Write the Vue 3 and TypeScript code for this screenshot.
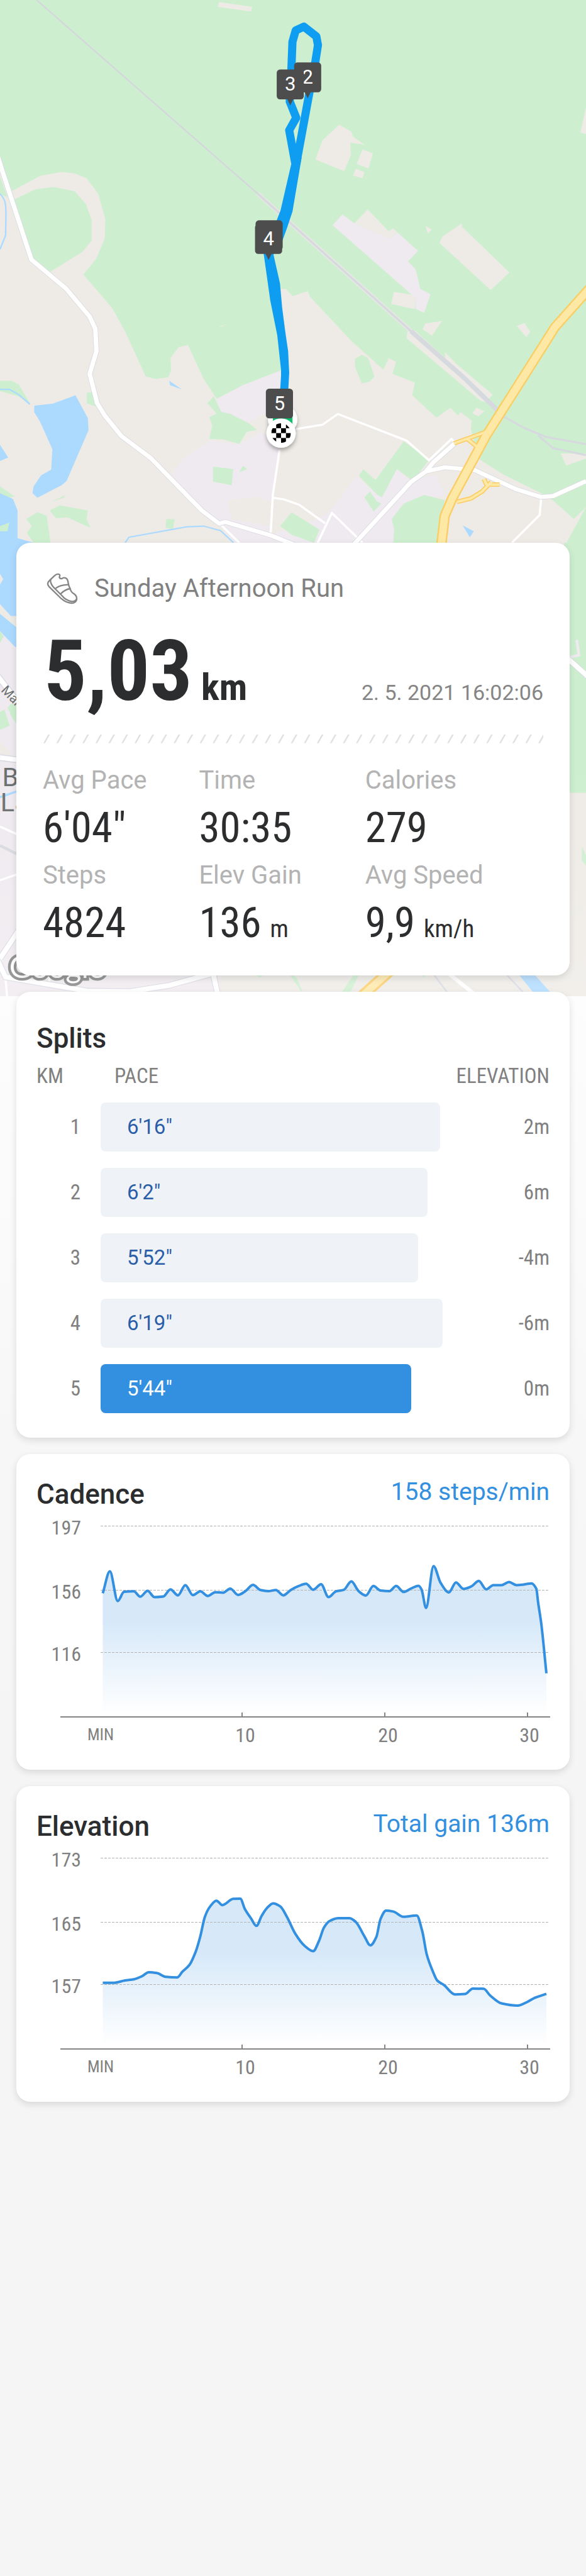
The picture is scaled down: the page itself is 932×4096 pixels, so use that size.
<script setup lang="ts">
interface Stat { label: string; value: string; unit?: string }
interface Split { km: number; pace: string; seconds: number; elevation: string }
interface Marker { label: string; x: number; y: number }
interface Chart {
  id: string
  title: string
  summary: string
  levels: string[]
  offset: number
  points: number[][]
}

const stats: Stat[] = [
  { label: 'Avg Pace', value: '6\'04"' },
  { label: 'Time', value: '30:35' },
  { label: 'Calories', value: '279' },
  { label: 'Steps', value: '4824' },
  { label: 'Elev Gain', value: '136', unit: 'm' },
  { label: 'Avg Speed', value: '9,9', unit: 'km/h' },
]

const splits: Split[] = [
  { km: 1, pace: '6\'16"', seconds: 376, elevation: '2m' },
  { km: 2, pace: '6\'2"', seconds: 362, elevation: '6m' },
  { km: 3, pace: '5\'52"', seconds: 352, elevation: '-4m' },
  { km: 4, pace: '6\'19"', seconds: 379, elevation: '-6m' },
  { km: 5, pace: '5\'44"', seconds: 344, elevation: '0m' },
]
const fullBarSeconds = 386
const fastest = Math.min(...splits.map((s) => s.seconds))
const barWidth = (s: Split): string => `${((s.seconds / fullBarSeconds) * 100).toFixed(2)}%`

const markers: Marker[] = [
  { label: '2', x: 567, y: 115 },
  { label: '3', x: 535, y: 128 },
  { label: '', x: 496, y: 406 },
  { label: '4', x: 495, y: 413 },
  { label: '5', x: 515, y: 716 },
]

const checks: number[][] = []
for (let row = 0; row < 4; row++) {
  for (let col = 0; col < 4; col++) {
    if ((row + col) % 2 === 1) checks.push([500 + col * 9, 780 + row * 9])
  }
}

const charts: Chart[] = [
  {
    id: 'cadence',
    title: 'Cadence',
    summary: '158 steps/min',
    levels: ['197', '156', '116'],
    offset: -114,
    points: [
      [275, 697], [294, 598], [315, 732], [332, 690], [358, 688], [375, 712], [395, 686], [413, 714], [437, 711],
      [456, 679], [476, 706], [496, 660], [516, 705], [536, 688], [556, 709], [576, 692], [597, 694], [616, 676],
      [637, 704], [656, 688], [677, 659], [697, 682], [718, 687], [738, 682], [758, 706], [778, 682], [798, 665],
      [819, 654], [838, 681], [859, 656], [879, 714], [899, 688], [920, 681], [940, 643], [960, 688], [979, 707],
      [999, 664], [1018, 684], [1042, 687], [1060, 664], [1080, 691], [1100, 675], [1120, 663], [1128, 680],
      [1140, 763], [1160, 574], [1179, 650], [1201, 693], [1220, 648], [1240, 677], [1262, 665], [1281, 641],
      [1301, 679], [1320, 660], [1342, 660], [1362, 646], [1382, 660], [1402, 657], [1422, 652], [1435, 676],
      [1440, 740], [1448, 830], [1462, 1058],
    ],
  },
  {
    id: 'elevation',
    title: 'Elevation',
    summary: 'Total gain 136m',
    levels: ['173', '165', '157'],
    offset: -116,
    points: [
      [275, 962], [303, 962], [335, 951], [358, 946], [380, 932], [398, 914], [420, 918], [443, 935], [474, 938],
      [488, 912], [507, 881], [524, 820], [536, 752], [548, 665], [561, 620], [579, 591], [595, 611], [624, 583],
      [643, 582], [655, 628], [672, 672], [686, 705], [700, 660], [714, 625], [731, 603], [750, 617], [768, 665],
      [790, 740], [815, 795], [838, 819], [853, 775], [867, 712], [882, 683], [905, 670], [935, 670], [952, 687],
      [975, 752], [991, 793], [1007, 755], [1018, 675], [1033, 636], [1052, 640], [1080, 664], [1115, 658],
      [1130, 730], [1142, 835], [1158, 910], [1170, 952], [1188, 972], [1217, 1014], [1245, 1012], [1265, 988],
      [1294, 989], [1312, 1020], [1342, 1055], [1385, 1065], [1410, 1049], [1432, 1029], [1462, 1012],
    ],
  },
]
const levelY = [24, 126, 225]
const ticks = [
  { label: '10', x: 327, textX: 332 },
  { label: '20', x: 554, textX: 559 },
  { label: '30', x: 781, textX: 784 },
]

/* Monotone cubic through the samples, flat at every peak and valley. */
function curve(p: number[][]): string {
  const slope = (i: number): number => (p[i + 1][1] - p[i][1]) / (p[i + 1][0] - p[i][0])
  const tangent = (i: number): number => {
    if (i === 0) return slope(0)
    if (i === p.length - 1) return slope(i - 1)
    const a = slope(i - 1)
    const b = slope(i)
    return a * b <= 0 ? 0 : (2 * a * b) / (a + b)
  }
  let d = `M${p[0][0]} ${p[0][1]}`
  for (let i = 0; i < p.length - 1; i++) {
    const h = (p[i + 1][0] - p[i][0]) / 3
    const y1 = p[i][1] + tangent(i) * h
    const y2 = p[i + 1][1] - tangent(i + 1) * h
    d += `C${(p[i][0] + h).toFixed(1)} ${y1.toFixed(1)} ${(p[i + 1][0] - h).toFixed(1)} ${y2.toFixed(1)} ${p[i + 1][0]} ${p[i + 1][1]}`
  }
  return d
}
const area = (p: number[][]): string => `${curve(p)}V1245H${p[0][0]}Z`
</script>

<template>
  <main class="page">
    <svg class="map" viewBox="0 0 1080 1836" role="img" aria-label="Route map">
      <defs>
        <linearGradient id="haze" x1="0" y1="0" x2="0" y2="1">
          <stop offset="0" stop-color="#fff" stop-opacity="0" />
          <stop offset="1" stop-color="#fff" stop-opacity="0.22" />
        </linearGradient>
        <clipPath id="flag"><circle cx="518" cy="798" r="18" /></clipPath>
        <filter id="drop" x="-50%" y="-50%" width="200%" height="200%">
          <feDropShadow dx="0" dy="5" stdDeviation="4" flood-opacity="0.3" />
        </filter>
      </defs>
      <rect width="1080" height="1836" class="land" />

      <g transform="scale(0.68878 0.63776)">
        <path class="green" d="M0 0H1568V1600H1500L1568 1465 1535 1500 1480 1446 1448 1425 1345 1370 1280 1325 1260 1240 1262 1215 1232 1190 1225 1200 1205 1178 1168 1207 1103 1142 1110 1105 1050 1080 1060 1045 1040 1035 1026 1068 940 985 830 858 823 841 783 856 765 835 750 835 752 1070 650 1113 580 1152 545 1095 503 997 478 1003 456 1035 458 1070 450 1090 418 1095 390 1088 335 958 300 890 223 793 258 747 280 690 282 635 263 560 232 515 200 501 165 497 108 508 32 552 10 490 0 450Z" />
        <path class="green" d="M37 577 95 547 145 540 200 553 230 590 245 635 245 695 220 728 135 785 85 750ZM0 510 20 570 0 560Z" />
        <path class="land" d="M586 6 675 20 672 33 583 20ZM908 360 940 380 945 395 975 418 937 412 939 448 921 494 844 461 863 405ZM970 432 998 443 986 487 954 474ZM952 488 975 497 970 515 945 507ZM1236 645V655L1363 787 1313 838 1176 702 1184 683ZM1138 652 1155 663 1145 676ZM1138 935 1183 927 1156 970 1131 951ZM1383 942 1403 933 1419 958 1408 974ZM1568 310 1553 383 1568 387ZM1090 958 1088 977 1285 1157 1300 1162 1318 1140 1220 1050 1190 1017 1192 1035 1110 955ZM1275 1178 1296 1188 1280 1203 1264 1194ZM1500 1310 1515 1345 1568 1325V1310ZM1054 843 1105 852 1114 862 1110 893 1047 878ZM1268 1362 1448 1440 1480 1446 1535 1500 1500 1568H1180L1200 1440ZM585 945 606 936 595 943Z" />
        <path class="urban" d="M890 651 916 619 948 645 1042 688 1064 672 1119 725 1092 755 1112 778 1125 835 1152 850 1135 904 1112 892 1114 862 1100 850Z" />
        <path class="land" d="M948 645 984 605 1040 668 1052 660 1064 672 1042 688Z" />
        <path class="urban" d="M580 1153 650 1113 752 1070V1180L715 1190 665 1222 592 1190ZM560 1273 640 1283 700 1248 750 1290 730 1440 725 1545 590 1515 540 1475 460 1370 490 1325ZM590 1515 725 1545 850 1500 880 1480 955 1375 1010 1430 1060 1355 1100 1390 1165 1370 1190 1430 1080 1470 1050 1600H640Z" />
        <path class="land" d="M610 1445 690 1435 725 1450V1520L620 1500Z" />
        <path class="green" d="M968 1025 985 1035 1002 1088 990 1102 968 1108 950 1060V1037ZM572 1145 592 1190 615 1195 665 1222 688 1242 660 1248 640 1283 600 1270 560 1268 568 1230 560 1205 580 1195 555 1165ZM570 1348 624 1355 620 1402 570 1392ZM650 1346 662 1355 640 1364ZM1080 1275 1148 1328 1105 1390 1062 1355 1022 1437 1010 1430 960 1375 972 1356 1005 1387ZM990 1420 1008 1448 1020 1455 1000 1478 975 1437ZM780 1480 855 1530 840 1568 780 1545 750 1520ZM1080 1455 1135 1430 1190 1445 1175 1600H1050L1055 1530 1048 1500ZM445 1500H468L463 1528 443 1525Z" />
        <path class="green" d="M0 1100H30L50 1110 80 1165 50 1145 0 1130ZM133 1475 160 1460 235 1475 232 1500 242 1525 180 1495 150 1497ZM70 1500 100 1480 125 1490 135 1568H90L72 1540 85 1520ZM0 1405 40 1435 0 1440ZM138 1450 175 1430 170 1438ZM232 1135 255 1130 258 1175 232 1165Z" />
        <path class="water" d="M92 1172 142 1166 202 1142 235 1208 237 1243 178 1390 165 1402 100 1438 87 1425 90 1405 110 1373 137 1357 140 1298 107 1218 91 1190ZM0 1425 35 1442 47 1475V1555L90 1568V1600H0ZM0 1285 22 1322 0 1332ZM453 1100 487 1125 455 1113ZM1238 1518 1268 1535 1257 1552Z" />
        <path class="green" d="M0 1520 25 1510 20 1535H0Z" />
        <path class="stream" d="M0 1125H25L50 1140 80 1168M0 560C20 580 16 600 15 680L0 720M335 1568 345 1552 500 1522 545 1520 590 1533 625 1568" />

        <path class="line" stroke="#e8e7e4" stroke-width="12" d="M690 560 1100 957" />
        <path class="line" stroke="#d6dade" stroke-width="6" d="M690 560 1100 957M1350 1205 1400 1235 1460 1262 1568 1283M1440 1258 1480 1295 1568 1315" />
        <path class="line" stroke="#d6d5dd" stroke-width="4" d="M98 0 690 560" />
        <path class="line" stroke="#d6dade" stroke-width="13" d="M1100 957 1240 1090 1350 1205" />

        <path class="line" stroke="#fff" stroke-width="6" d="M790 1240 863 1227 904 1196 1088 1273 1148 1330 1208 1268 1218 1280M748 1300 730 1430 724 1545M730 1438 760 1443 800 1458 870 1512M850 1568 888 1482 970 1568M1448 1440 1444 1488 1370 1568M590 1515 640 1568" />
        <g class="line">
          <path stroke="#dadae2" stroke-width="15" d="M-5 455 5 490 84 750 177 834 240 915 255 950 258 1015 240 1080 260 1165 280 1200 325 1260 403 1323 540 1475 587 1513 603 1508 725 1547 790 1575M945 1575 1100 1392 1140 1362 1190 1350 1270 1358 1380 1413 1448 1436 1480 1433 1568 1390M1140 1362 1160 1335 1218 1280" />
          <path stroke="#fff" stroke-width="12" d="M-5 455 5 490 84 750 177 834 240 915 255 950 258 1015 240 1080 260 1165 280 1200 325 1260 403 1323 540 1475 587 1513 603 1508 725 1547 790 1575M945 1575 1100 1392 1140 1362 1190 1350 1270 1358 1380 1413 1448 1436 1480 1433 1568 1390M1140 1362 1160 1335 1218 1280" />
          <path stroke="#fbcd65" stroke-width="13" d="M1215 1281 1300 1248M1248 1266 1278 1292M1222 1450 1260 1440 1290 1420 1315 1392M1295 1384 1302 1400 1337 1400" />
          <path stroke="#fbcd65" stroke-width="28" d="M1580 830 1485 945 1400 1090 1300 1260 1210 1440 1190 1490 1178 1600" />
          <path stroke="#fee8a5" stroke-width="7" d="M1215 1281 1300 1248M1248 1266 1278 1292M1222 1450 1260 1440 1290 1420 1315 1392M1295 1384 1302 1400 1337 1400" />
          <path stroke="#fee8a5" stroke-width="20" d="M1580 830 1485 945 1400 1090 1300 1260 1210 1440 1190 1490 1178 1600" />
        </g>
      </g>

      <rect x="1040" y="1000" width="40" height="461" class="green" />
      <rect x="400" y="1461" width="680" height="375" class="land" />
      <path class="green" d="M1073 1560 1080 1576V1595L1072 1585Z" />
      <path class="line" stroke="#efeaef" stroke-width="5" d="M1063 1179 1067 1207 1050 1211" />
      <path class="line" stroke="#d8d8e2" stroke-width="11" d="M1046 1213 1084 1247" />
      <path class="line" stroke="#fff" stroke-width="9" d="M1046 1213 1084 1247" />

      <rect x="0" y="1010" width="40" height="180" class="land" />
      <path class="urban" d="M0 1163 26 1190H60V1700H405V1836H0Z" />
      <path class="land" d="M0 1366 24 1392H0Z" />
      <path class="water" d="M0 1000H60V1135H20L0 1113V1077L6 1067 0 1057ZM0 1131 40 1164V1200L26 1190 0 1163Z" />
      <path class="green" d="M0 1163 7 1172 0 1185ZM14 1304 20 1297 40 1298V1345L30 1333 22 1322ZM0 1312 8 1307 18 1337 0 1345Z" />
      <path class="line" stroke="#d8d8e2" stroke-width="12" d="M-4 1246 36 1298M0 1396 40 1401" />
      <path class="line" stroke="#fff" stroke-width="9" d="M-4 1246 36 1298M0 1396 40 1401" />
      <path class="stream" d="M0 1469 40 1455" />
      <path class="line" stroke="#fff" stroke-width="4" d="M0 1523 40 1541M0 1622 40 1608M10 1800 13 1836M92 1797 90 1812" />
      <path class="line" stroke="#d6d9de" stroke-width="5" d="M0 1558 40 1578" />
      <path class="line" stroke="#d8d8e2" stroke-width="12" d="M0 1766 40 1706M-3 1772 10 1800 160 1826 240 1827 310 1816 390 1794M392 1790 402 1836" />
      <path class="line" stroke="#fff" stroke-width="9" d="M0 1766 40 1706M-3 1772 10 1800 160 1826 240 1827 310 1816 390 1794M392 1790 402 1836" />
      <path class="green" d="M460 1790 478 1801 500 1790ZM530 1790 547 1802 561 1836 545 1812ZM656 1790 630 1828H646L664 1790ZM770 1790 781 1801 792 1790Z" />
      <path class="line" stroke="#fbcd65" stroke-width="21" d="M722 1786 664 1838" />
      <path class="line" stroke="#fee8a5" stroke-width="13" d="M722 1786 664 1838" />
      <path class="line" stroke="#d8d8e2" stroke-width="3" d="M798 1794 824 1828M928 1790 964 1828" />
      <path class="line" stroke="#fff" stroke-width="7" d="M822 1790 872 1830" />
      <path class="water" d="M950 1788H978L1016 1830H984Z" />
      <text class="street" transform="translate(1 1273) rotate(46)">Mar</text>
      <text class="place" x="4" y="1449">B</text>
      <text class="place" x="1" y="1495">La</text>
      <text class="brand" x="17" y="1802">Google</text>
      <rect y="1400" width="1080" height="436" fill="url(#haze)" />

      <g fill="#0e9df1">
        <path d="M486 468 498 553 511 618 518 682V692L516 724H531L533 687 531 647 526 613 520 567 516 522 504 469 521 442 529 420 539 390 556 290 538 297 517 388 510 406Z" />
        <path class="route" d="M546 302 570 172 581 115 586 83 583 67 560 49 545 56 539 77 537 128 534 187 546 217 533 240 544 300" />
      </g>

      <g filter="url(#drop)">
        <circle cx="521" cy="773" r="27" fill="#fff" />
      </g>
      <rect x="503" y="755" width="36" height="30" fill="#0cc26c" />
      <circle cx="518" cy="798" r="27" fill="#fff" filter="url(#drop)" />
      <g clip-path="url(#flag)">
        <rect v-for="(c, i) in checks" :key="i" :x="c[0]" :y="c[1]" width="9" height="9" />
      </g>
      <g v-for="(m, i) in markers" :key="i" :transform="`translate(${m.x} ${m.y})`">
        <rect x="-25" width="50" height="55" rx="6" fill="#4d4d4d" />
        <path v-if="m.label !== '5'" d="M-6 54H6L0 66Z" fill="#4d4d4d" />
        <text v-if="m.label" class="pin" y="39">{{ m.label }}</text>
      </g>
    </svg>

    <section class="card summary">
      <header class="activity">
        <svg class="shoe" viewBox="76 106 172 172" aria-hidden="true">
          <path d="M93 147 119 122Q134 108 147 115 151 120 146 129 149 139 160 137 170 129 183 135 193 141 194 158 197 176 205 192 210 211 224 219 243 231 241 250 238 271 213 271 185 271 157 247L90 181Q74 164 93 147Z" />
          <path d="M98 143Q96 164 114 184L160 230Q182 258 216 262 235 262 241 248M129 188Q151 171 195 170M154 220Q175 197 205 192" />
        </svg>
        <h1>Sunday Afternoon Run</h1>
      </header>
      <div class="headline">
        <p class="distance">5,03 <span>km</span></p>
        <time datetime="2021-05-02T16:02:06">2. 5. 2021 16:02:06</time>
      </div>
      <svg class="divider" viewBox="0 0 922 16" aria-hidden="true">
        <defs>
          <pattern id="slashes" width="24" height="16" patternUnits="userSpaceOnUse">
            <path d="M1 16 10 0H13L4 16Z" fill="#dedede" />
          </pattern>
        </defs>
        <rect width="922" height="16" fill="url(#slashes)" />
      </svg>
      <dl class="stats">
        <div v-for="s in stats" :key="s.label">
          <dt>{{ s.label }}</dt>
          <dd>{{ s.value }}<small v-if="s.unit">{{ s.unit }}</small></dd>
        </div>
      </dl>
    </section>

    <section class="card splits">
      <h2>Splits</h2>
      <table>
        <thead>
          <tr>
            <th class="km" scope="col">KM</th>
            <th class="pace" scope="col">PACE</th>
            <th class="elev" scope="col">ELEVATION</th>
          </tr>
        </thead>
        <tbody>
          <tr v-for="s in splits" :key="s.km">
            <td class="km">{{ s.km }}</td>
            <td>
              <div class="bar" :class="{ fastest: s.seconds === fastest }" :style="{ width: barWidth(s) }">{{ s.pace }}</div>
            </td>
            <td class="elev">{{ s.elevation }}</td>
          </tr>
        </tbody>
      </table>
    </section>

    <section v-for="c in charts" :key="c.id" class="card chart">
      <header>
        <h2>{{ c.title }}</h2>
        <p>{{ c.summary }}</p>
      </header>
      <svg viewBox="0 0 816 372" role="img" :aria-label="c.title">
        <defs>
          <linearGradient :id="`${c.id}-fill`" gradientUnits="userSpaceOnUse" x1="0" y1="820" x2="0" y2="1240">
            <stop offset="0" stop-color="#338fdf" stop-opacity="0.2" />
            <stop offset="1" stop-color="#338fdf" stop-opacity="0" />
          </linearGradient>
        </defs>
        <g :transform="`matrix(0.5944 0 0 0.3522 -58 ${c.offset})`">
          <path :d="area(c.points)" :fill="`url(#${c.id}-fill)`" />
        </g>
        <line v-for="y in levelY" :key="y" class="grid" x1="102" :y1="y + 0.5" x2="815" :y2="y + 0.5" />
        <g :transform="`matrix(0.5944 0 0 0.3522 -58 ${c.offset})`">
          <path class="trace" :d="curve(c.points)" />
        </g>
        <path class="axis" d="M38 328H817M327 327V321M554 327V321M781 327V321" />
        <text v-for="(l, i) in c.levels" :key="l" class="level" x="71" :y="levelY[i] + 14">{{ l }}</text>
        <text class="unit" x="102" y="365">MIN</text>
        <text v-for="t in ticks" :key="t.label" class="tick" :x="t.textX" y="368">{{ t.label }}</text>
      </svg>
    </section>
  </main>
</template>

<style>
body {
  margin: 0;
  background: #f5f5f5;
}
</style>

<style scoped>
.page {
  --condensed: "Roboto Condensed", Roboto, "Liberation Sans", sans-serif;
  position: relative;
  box-sizing: border-box;
  display: flex;
  flex-direction: column;
  gap: 26px;
  min-height: 100vh;
  padding: 863px 26px 26px;
  background: linear-gradient(#fdfdfd 1580px, #f7f7f7 2300px, #f5f5f5 2900px);
  color: #2c2d2e;
  font-family: Roboto, "Liberation Sans", sans-serif;
}
h1, h2, p, dl, dd { margin: 0; }

.map {
  position: absolute;
  top: 0;
  left: 0;
  width: 100%;
  height: auto;
}
.land { fill: #eeebe6; }
.urban { fill: #efeaef; }
.green { fill: #cdefcf; }
.water { fill: #acdaff; }
.stream { fill: none; stroke: #acdaff; stroke-width: 4; }
.line { fill: none; stroke-linejoin: round; }
.route { fill: none; stroke: #0e9df1; stroke-width: 15; stroke-linejoin: round; }
.street { font-size: 24px; fill: #6b6e6e; }
.place { font-size: 48px; fill: #6b6e6e; }
.brand {
  font-family: Lato, sans-serif;
  font-size: 56px;
  fill: #fff;
  stroke: #7d7d7d;
  stroke-width: 10;
  paint-order: stroke;
}
.pin { font-size: 36px; fill: #fff; text-anchor: middle; }

.card {
  position: relative;
  box-sizing: border-box;
  border-radius: 22px;
  background: #fff;
  box-shadow: 0 4px 12px rgba(0, 0, 0, 0.12);
}

.summary { padding: 48px 40px 42px; }
.activity {
  display: flex;
  align-items: center;
  gap: 26px;
  height: 50px;
  padding-left: 8px;
}
.shoe {
  width: 50px;
  height: 50px;
  fill: none;
  stroke: #858585;
  stroke-width: 8;
  stroke-linecap: round;
  stroke-linejoin: round;
}
h1 { color: #808080; font-size: 40px; font-weight: 400; line-height: 50px; }
.headline {
  display: flex;
  align-items: baseline;
  justify-content: space-between;
  height: 147px;
  margin-top: 33px;
  padding: 0 2px 0 4px;
}
.distance {
  display: flex;
  align-items: baseline;
  gap: 14px;
  font-family: var(--condensed);
  font-size: 134px;
  font-weight: 700;
  line-height: 147px;
  white-space: nowrap;
}
.distance span { font-size: 60px; line-height: 60px; }
time { color: #858585; font-size: 34px; line-height: 40px; }
.divider { display: block; width: 100%; height: auto; margin-top: 27px; padding: 0 2px; box-sizing: border-box; }
.stats {
  display: grid;
  grid-template-columns: 249fr 265fr 286fr;
  row-gap: 12px;
  margin-top: 37px;
  padding-left: 2px;
}
dt { color: #b3b3b3; font-size: 40px; line-height: 44px; }
dd {
  display: flex;
  align-items: baseline;
  gap: 14px;
  height: 84px;
  margin-top: 11px;
  font-family: var(--condensed);
  font-size: 67px;
  line-height: 84px;
  white-space: nowrap;
}
dd small { font-size: 39px; line-height: 40px; }

h2 { font-size: 44px; font-weight: 500; line-height: 52px; }
.splits { padding: 48px 32px 26px; }
table {
  width: 100%;
  table-layout: fixed;
  border-collapse: collapse;
  color: #808080;
  font-family: var(--condensed);
  font-size: 33px;
  line-height: 40px;
}
th { padding: 14px 0 9px; font-weight: 400; text-align: left; }
td { height: 104px; padding: 0; }
th.km { width: 102px; }
td.km { padding-right: 32px; text-align: right; }
th.pace { padding-left: 22px; }
.elev, th.elev { width: 160px; text-align: right; }
.bar {
  box-sizing: border-box;
  padding: 19px 0 19px 42px;
  border-radius: 8px;
  background: #eff2f7;
  color: #2b5ea8;
  font-family: Roboto, "Liberation Sans", sans-serif;
}
.bar.fastest { background: #338fdf; color: #fff; }

.chart { padding: 38px 32px 40px; }
.chart header { display: flex; justify-content: space-between; align-items: flex-start; }
.chart header p { color: #338fdf; font-size: 39px; line-height: 44px; }
.chart svg { display: block; width: 100%; height: auto; overflow: visible; }
.grid { stroke: #b3b3b3; stroke-width: 1; stroke-dasharray: 4 2; }
.trace { fill: none; stroke: #338fdf; stroke-width: 4; vector-effect: non-scaling-stroke; }
.axis { fill: none; stroke: #858585; stroke-width: 2; }
.chart text { fill: #808080; font-family: var(--condensed); font-size: 32px; }
.chart .level { text-anchor: end; }
.chart .tick { text-anchor: middle; }
.chart .unit { text-anchor: middle; font-size: 26px; }
</style>
